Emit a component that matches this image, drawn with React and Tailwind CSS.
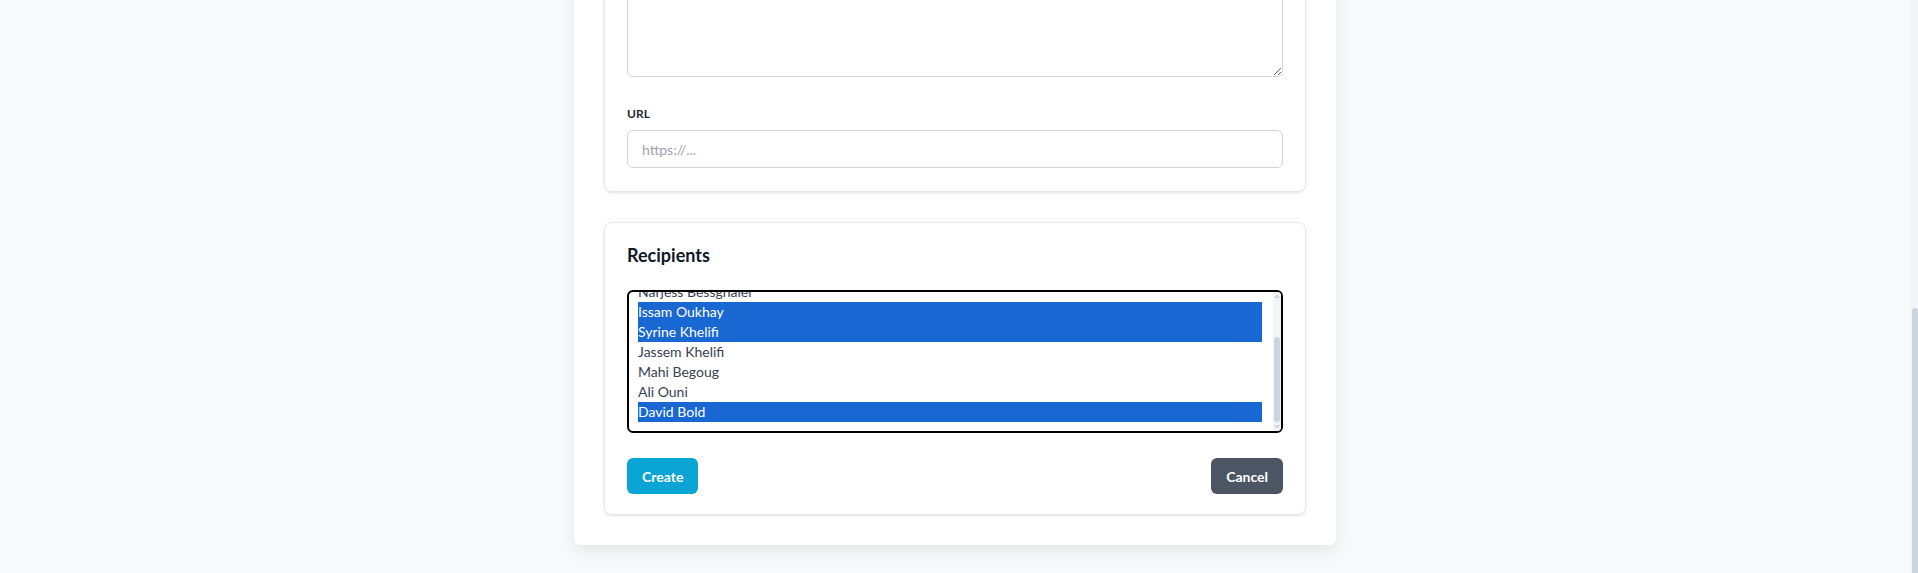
import React from "react";

const recipients = [
  { name: "Amine Trabelsi", selected: false },
  { name: "Sarra Ben Ali", selected: false },
  { name: "Narjess Bessghaier", selected: false },
  { name: "Issam Oukhay", selected: true },
  { name: "Syrine Khelifi", selected: true },
  { name: "Jassem Khelifi", selected: false },
  { name: "Mahi Begoug", selected: false },
  { name: "Ali Ouni", selected: false },
  { name: "David Bold", selected: true },
];

const RecipientList = () => {
  return (
    <div className="h-[143px] flex overflow-hidden rounded-[6px] border-2 border-black bg-white">
      {/* list scrolled to its end */}
      <div className="flex-1 flex flex-col justify-end overflow-hidden pl-[9px] pr-[11px]">
        <div className="shrink-0 pt-[10px] pb-[9px]">
          {recipients.map((r) => (
            <div
              key={r.name}
              className={
                r.selected
                  ? "h-5 leading-5 text-[14px] bg-[#1967d2] text-white"
                  : "h-5 leading-5 text-[14px] text-[#374151]"
              }
            >
              {r.name}
            </div>
          ))}
        </div>
      </div>
      {/* scrollbar */}
      <div className="w-[8px] flex flex-col items-center bg-[#f1f5f9]">
        <div className="h-[8px] flex items-center justify-center">
          <svg width="6" height="4" viewBox="0 0 6 4">
            <path d="M3 0 L6 4 L0 4 Z" fill="#cbd5e1" />
          </svg>
        </div>
        <div className="flex-1 w-full flex flex-col justify-end items-center">
          <div className="h-[85px] w-[6px] mb-[1px] rounded-full bg-[#cbd5e1]" />
        </div>
        <div className="h-[8px] flex items-center justify-center">
          <svg width="6" height="4" viewBox="0 0 6 4">
            <path d="M0 0 L6 0 L3 4 Z" fill="#cbd5e1" />
          </svg>
        </div>
      </div>
    </div>
  );
};

const App = () => {
  return (
    <div
      className="h-screen flex bg-[#f8f9fa] text-[#111827]"
      style={{ fontFamily: "Lato, 'Noto Sans', sans-serif" }}
    >
      <div className="flex-1 flex flex-col justify-end overflow-hidden pb-[28px]">
        <div className="shrink-0 w-[762px] mx-auto bg-white rounded-md shadow-[0_6px_16px_rgba(0,0,0,0.08)] px-[30px] pb-[30px] flex flex-col gap-[30px]">
          {/* details card (top part scrolled out of view) */}
          <div className="border border-[#e5e7eb] rounded-lg shadow-sm px-[22px] pt-[18px] pb-[23px]">
            <textarea className="block w-full h-[200px] border border-[#d1d5db] rounded-md px-[14px] py-2 text-[14px] outline-none" />
            <label className="block text-[12px] leading-4 font-bold text-[#1f2937] mt-[29px] mb-2">URL</label>
            <input
              type="text"
              placeholder="https://..."
              className="block w-full h-[38px] border border-[#d1d5db] rounded-md px-[14px] text-[14px] text-[#374151] placeholder:text-[#9ca3af] outline-none"
            />
          </div>

          {/* recipients card */}
          <div className="border border-[#e5e7eb] rounded-lg shadow-sm px-[22px] pt-[18px] pb-[20px]">
            <h2 className="text-[18px] leading-7 font-bold mb-[21px]">Recipients</h2>
            <RecipientList />
            <div className="flex justify-between mt-[25px]">
              <button className="h-9 px-[15px] rounded-md bg-[#0aa5d5] text-white text-[14px] font-bold">
                Create
              </button>
              <button className="h-9 px-[15px] rounded-md bg-[#4b5563] text-white text-[14px] font-bold">
                Cancel
              </button>
            </div>
          </div>
        </div>
      </div>
      {/* page scrollbar */}
      <div className="w-2 flex flex-col justify-end bg-[#f1f5f9]">
        <div className="h-[265px] w-[6px] ml-auto rounded-t-[3px] bg-[#cbd5e1]" />
      </div>
    </div>
  );
};

export default App;
